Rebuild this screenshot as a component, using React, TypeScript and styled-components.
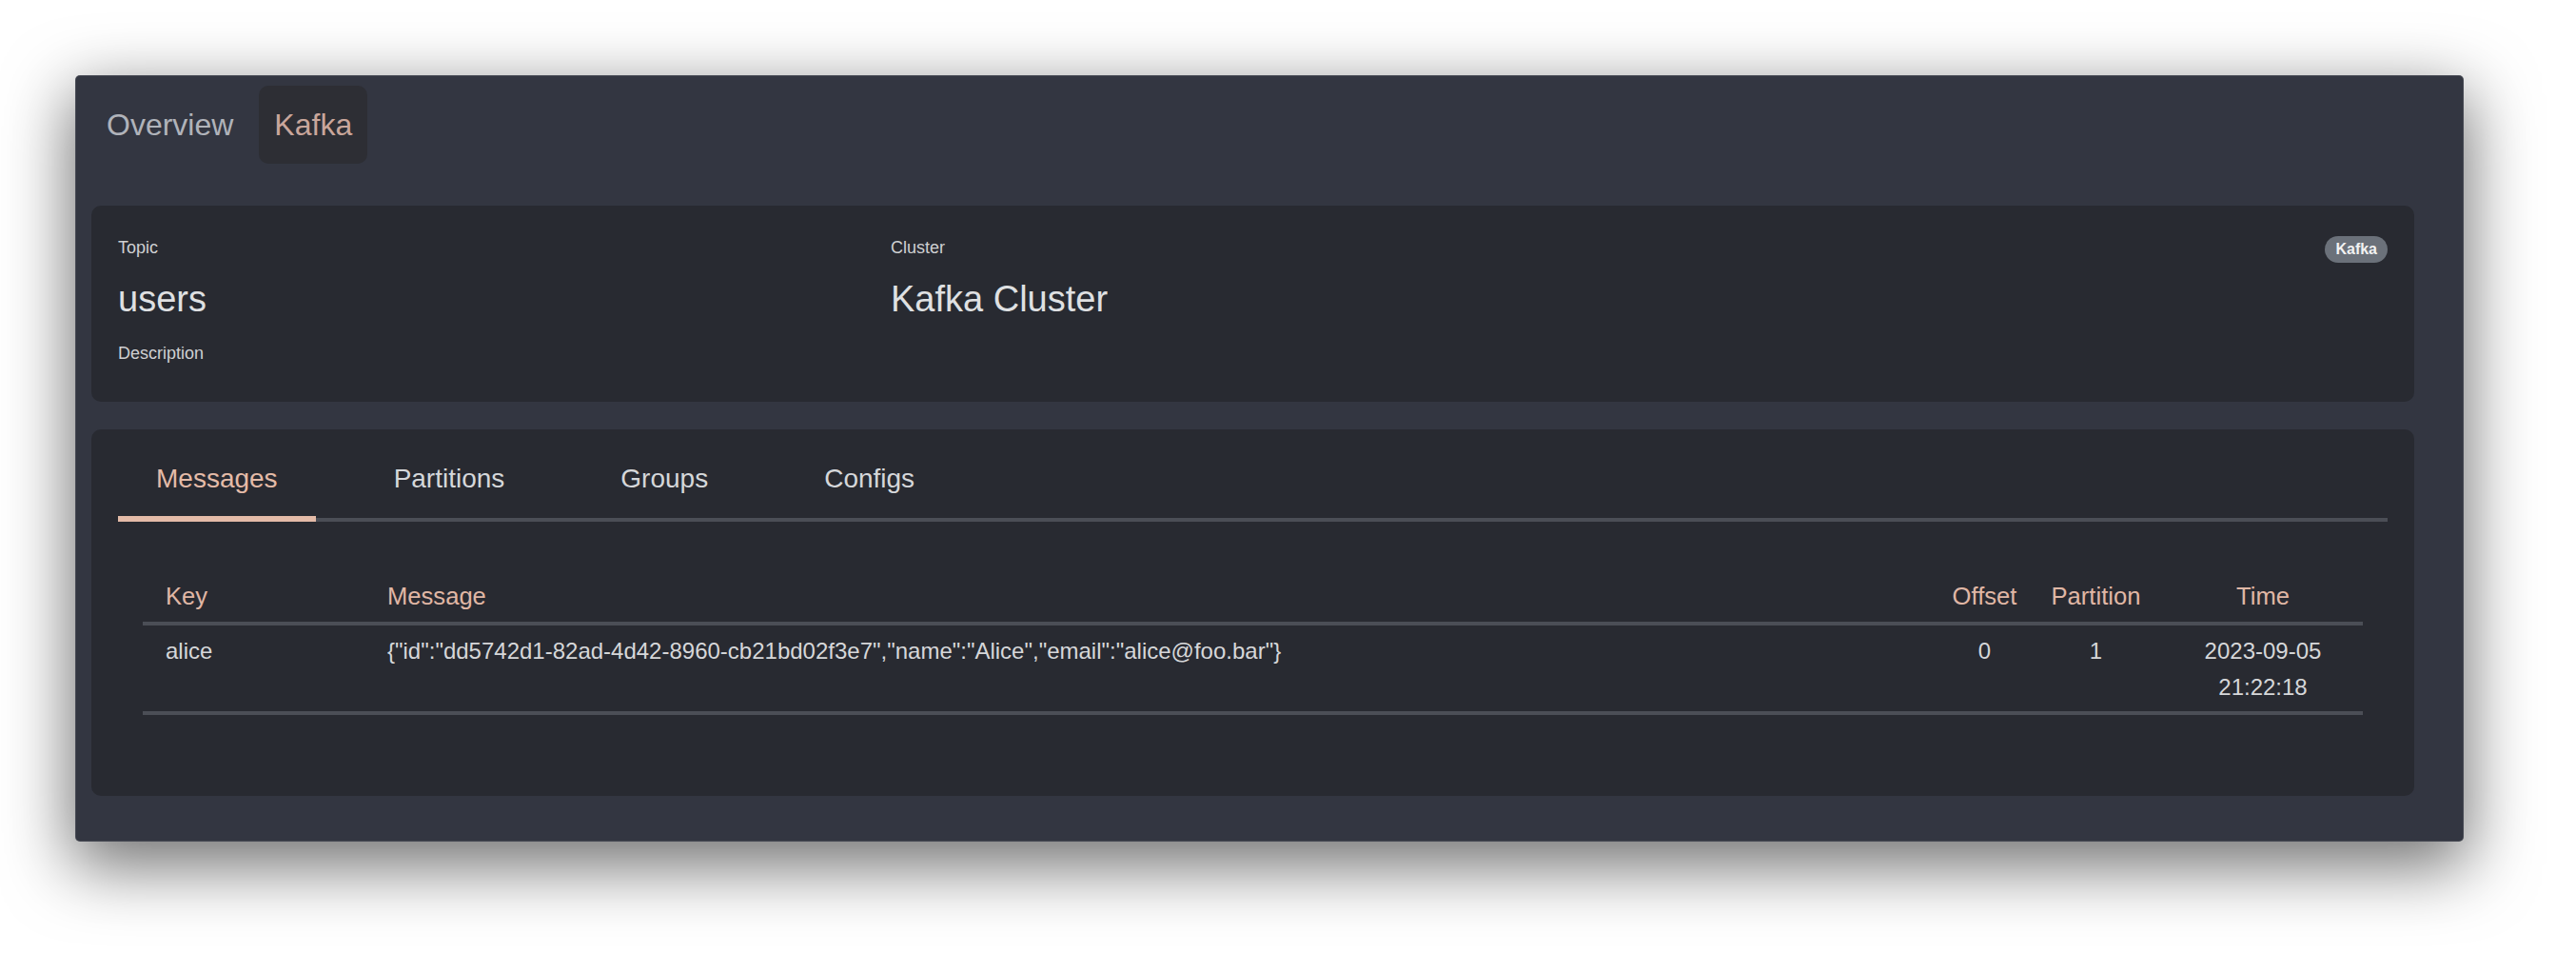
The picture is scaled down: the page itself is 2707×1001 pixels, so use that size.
import React from "react";
import styled, { createGlobalStyle } from "styled-components";

const GlobalStyle = createGlobalStyle`
  html, body {
    margin: 0;
    padding: 0;
    background: #ffffff;
  }
  body {
    font-family: "Liberation Sans", Arial, Helvetica, sans-serif;
  }
  * { box-sizing: border-box; }
`;

const Page = styled.div`
  padding: 79px 118px 117px 79px;
`;

const Window = styled.div`
  background: #333641;
  border-radius: 5px;
  padding: 11px 52px 48px 17px;
  box-shadow: inset 0 0 0 1px rgba(255, 255, 255, 0.1), 0 22px 70px 4px rgba(0, 0, 0, 0.56);
`;

const Nav = styled.nav`
  display: flex;
  gap: 11px;
`;

const NavItem = styled.div<{ $active?: boolean }>`
  height: 82px;
  line-height: 82px;
  padding: 0 16px;
  font-size: 32px;
  border-radius: 10px;
  color: ${(p) => (p.$active ? "#c9a69b" : "#b0b3ba")};
  background: ${(p) => (p.$active ? "#2d2e34" : "transparent")};
`;

const Card = styled.section<{ $pad: string; $mt: number }>`
  background: #282a31;
  border-radius: 10px;
  padding: ${(p) => p.$pad};
  margin-top: ${(p) => p.$mt}px;
`;

const InfoGrid = styled.div`
  display: grid;
  grid-template-columns: repeat(3, 1fr);
  column-gap: 51px;
  align-items: start;
`;

const Field = styled.div``;

const Label = styled.div<{ $mt?: number }>`
  font-size: 18px;
  line-height: 27px;
  color: #cfd0d2;
  margin-top: ${(p) => p.$mt ?? 0}px;
`;

const Value = styled.div`
  font-size: 38px;
  line-height: 57px;
  margin-top: 12px;
  color: #dfe0e2;
`;

const Badge = styled.span`
  justify-self: end;
  margin-top: 1px;
  height: 28px;
  line-height: 28px;
  padding: 0 11px;
  border-radius: 14px;
  background: #6b717a;
  color: #f2f2f2;
  font-size: 16px;
  font-weight: 700;
`;

const TabList = styled.div`
  display: flex;
  gap: 42px;
  border-bottom: 4px solid #4b4e56;
`;

const Tab = styled.div<{ $active?: boolean }>`
  font-size: 28px;
  line-height: 42px;
  padding: 3px 40px 18px;
  margin-bottom: -4px;
  border-bottom: 6px solid ${(p) => (p.$active ? "#e4bba8" : "transparent")};
  color: ${(p) => (p.$active ? "#e4bba8" : "#d5d7da")};
`;

const Panel = styled.div`
  padding: 48px 26px 57px;
`;

const Table = styled.table`
  width: 100%;
  table-layout: fixed;
  border-collapse: collapse;
`;

const Th = styled.th<{ $align?: string; $px?: number }>`
  font-size: 25.6px;
  line-height: 41px;
  font-weight: 400;
  color: #e0b7a5;
  text-align: ${(p) => p.$align ?? "left"};
  padding: 10px ${(p) => p.$px ?? 24}px 6px;
  border-bottom: 4px solid #4b4e56;
`;

const Td = styled.td<{ $align?: string; $px?: number }>`
  font-size: 24px;
  line-height: 38.4px;
  color: #d6d7d9;
  vertical-align: top;
  text-align: ${(p) => p.$align ?? "left"};
  padding: 8px ${(p) => p.$px ?? 24}px 5px;
  border-bottom: 4px solid #4b4e56;
`;

const tabs = ["Messages", "Partitions", "Groups", "Configs"];

const messages = [
  {
    key: "alice",
    message:
      '{"id":"dd5742d1-82ad-4d42-8960-cb21bd02f3e7","name":"Alice","email":"alice@foo.bar"}',
    offset: 0,
    partition: 1,
    time: "2023-09-05 21:22:18",
  },
];

export default function App() {
  return (
    <>
      <GlobalStyle />
      <Page>
        <Window>
          <Nav>
            <NavItem>Overview</NavItem>
            <NavItem $active>Kafka</NavItem>
          </Nav>

          <Card $pad="31px 28px 37px" $mt={44}>
            <InfoGrid>
              <Field>
                <Label>Topic</Label>
                <Value>users</Value>
                <Label $mt={15}>Description</Label>
              </Field>
              <Field>
                <Label>Cluster</Label>
                <Value>Kafka Cluster</Value>
              </Field>
              <Badge>Kafka</Badge>
            </InfoGrid>
          </Card>

          <Card $pad="28px" $mt={29}>
            <TabList>
              {tabs.map((t, i) => (
                <Tab key={t} $active={i === 0}>
                  {t}
                </Tab>
              ))}
            </TabList>
            <Panel>
              <Table>
                <colgroup>
                  <col style={{ width: 233 }} />
                  <col />
                  <col style={{ width: 93 }} />
                  <col style={{ width: 141 }} />
                  <col style={{ width: 210 }} />
                </colgroup>
                <thead>
                  <tr>
                    <Th>Key</Th>
                    <Th>Message</Th>
                    <Th $align="center" $px={8}>Offset</Th>
                    <Th $align="center" $px={8}>Partition</Th>
                    <Th $align="center">Time</Th>
                  </tr>
                </thead>
                <tbody>
                  {messages.map((m) => (
                    <tr key={m.key + m.offset}>
                      <Td>{m.key}</Td>
                      <Td>{m.message}</Td>
                      <Td $align="center" $px={8}>{m.offset}</Td>
                      <Td $align="center" $px={8}>{m.partition}</Td>
                      <Td $align="center">{m.time}</Td>
                    </tr>
                  ))}
                </tbody>
              </Table>
            </Panel>
          </Card>
        </Window>
      </Page>
    </>
  );
}
